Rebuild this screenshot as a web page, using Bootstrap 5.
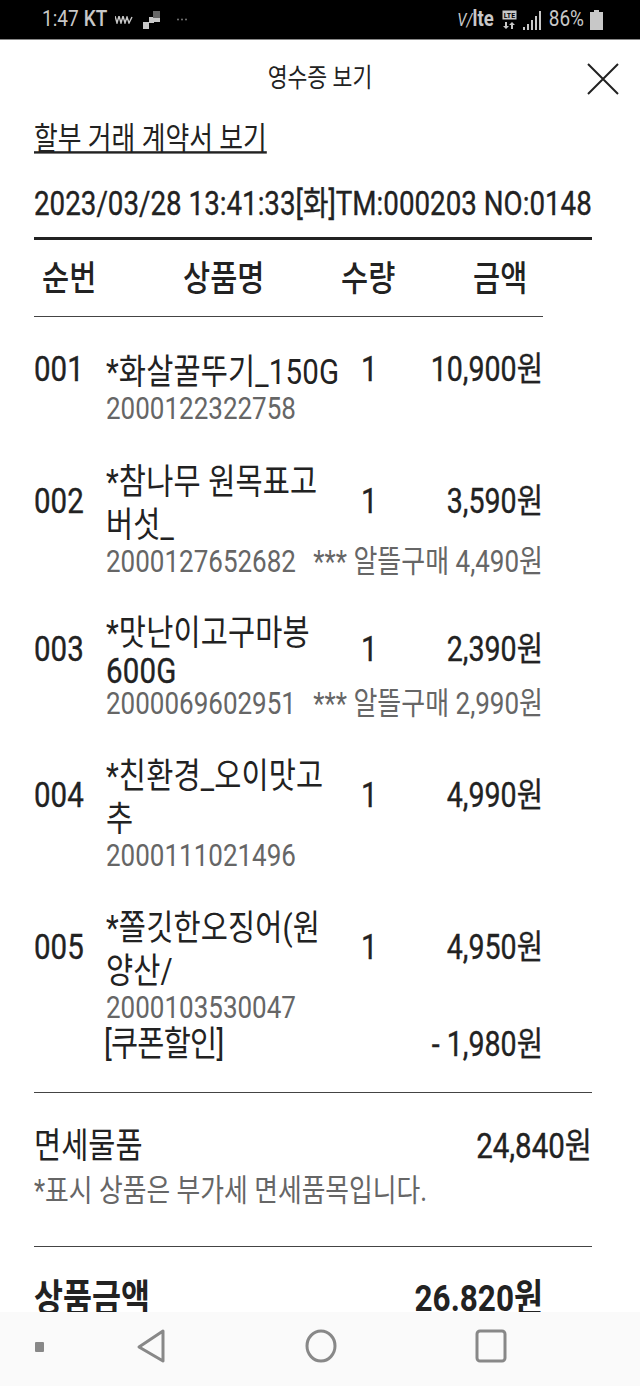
<!DOCTYPE html>
<html lang="ko">
<head>
    <meta charset="UTF-8">
    <meta name="viewport" content="width=device-width, initial-scale=1.0">
    <title>영수증 보기</title>
    <link href="https://cdn.jsdelivr.net/npm/bootstrap@5.3.0/dist/css/bootstrap.min.css" rel="stylesheet">
    <style>
        html, body { height: 1386px; overflow: hidden; }
        body { font-family: Roboto, "Noto Sans CJK KR", sans-serif; color: #222; background: #fff; }
        /* 스크린샷이 세로로 늘어나 있어서 글자를 세로로 키움 */
        .tx { display: block; white-space: nowrap; transform: scaleY(1.2); }
        .num-text { -webkit-text-stroke: .3px #222; }
        .status-bar { height: 40px; flex: none; background: #000; color: #c8c8c8; font-size: 19px; padding: 0 37px 0 42px; border-bottom: 1px solid #888; }
        .status-bar svg { display: block; flex: none; }
        .status-kt { font-weight: 500; margin-left: 5px; }
        .status-volte { font-weight: 700; font-size: 18.5px; }
        .status-volte i { font-weight: 400; font-size: 15px; }
        .title-bar { height: 76px; flex: none; font-size: 21.6px; padding-top: 2px; }
        .close-x { position: absolute; right: 21px; top: 23px; }
        .receipt { flex: 1 1 auto; min-height: 0; overflow: hidden; padding: 0 48px 0 34px; font-size: 29.5px; line-height: 43px; }
        .contract-link { display: inline-block; color: #222; font-size: 25.8px; line-height: 36px; margin-top: -2px; }
        .stamp { margin-top: 25px; font-size: 27.75px; line-height: 40px; }
        .rule-thick { height: 3px; background: #222; margin-top: 13px; }
        .rule-thin { height: 1px; background: #444; }
        .head-row { height: 76px; width: 509px; font-weight: 500; display: grid; grid-template-columns: 141px 158px 132px 1fr; align-items: center; padding-left: 8px; padding-top: 2px; }
        .items { width: 509px; padding-top: 32px; }
        .item-top { display: flex; align-items: center; }
        .item-no, .item-qty, .item-price { padding-bottom: 4px; }
        .item-no { width: 72px; flex: none; }
        .item-name { width: 255px; flex: none; letter-spacing: .15px; }
        .item-qty { flex: none; }
        .item-price { margin-left: auto; font-size: 28.6px; }
        .item-sub { color: #666; padding-left: 72px; display: flex; justify-content: space-between; font-size: 26px; line-height: 28px; }
        .item-first { line-height: 24px; margin-bottom: 41px; }
        .item-tight { margin-top: 39px; margin-bottom: 39px; }
        .item-tight .item-name { line-height: 38px; }
        .item-tight .item-sub { line-height: 26px; }
        .item-last-gap { margin-bottom: 38px; }
        .coupon-row { display: flex; justify-content: space-between; padding-left: 70px; line-height: 36px; margin-top: 5px; }
        .coupon-label { letter-spacing: -.8px; }
        .coupon-amount { font-size: 28.6px; }
        .total-amount { font-size: 29.5px; }
        .tax-note { color: #666; font-size: 25.8px; line-height: 38px; margin-top: 3px; }
        .sum-row { font-weight: 700; font-size: 31.5px; width: 509px; margin-top: 30px; }
        .nav-bar { height: 74px; flex: none; background: #fafafa; }
        .nav-bar svg { position: absolute; }
    </style>
</head>
<body class="d-flex flex-column">
    <!-- 상태바 -->
    <div class="status-bar d-flex align-items-center">
        <span class="tx">1:47</span><span class="tx status-kt">KT</span>
        <svg class="ms-2" width="18" height="8" viewBox="0 0 18 8" fill="none" stroke="#c8c8c8" stroke-width="1.4"><path d="M0 0l2 7 2-7 2 7 2-7 2 7 2-6 2 6 3-6"/></svg>
        <svg style="margin-left:10px" width="17" height="18" viewBox="0 0 17 18"><path fill="#c8c8c8" d="M0 11h6V6h5v6H6v6H0z"/><rect x="10" y="0" width="7" height="7" fill="#666"/><rect x="10" y="7" width="7" height="4" fill="#c8c8c8"/></svg>
        <svg style="margin-left:17px" width="10" height="3" viewBox="0 0 10 3" fill="#777"><circle cx="1" cy="1.5" r="1"/><circle cx="5" cy="1.5" r="1"/><circle cx="9" cy="1.5" r="1"/></svg>
        <span class="tx status-volte ms-auto"><i>V/</i>lte</span>
        <svg class="ms-2" width="15" height="20" viewBox="0 0 15 20"><rect x=".5" y=".5" width="14" height="9" fill="#c8c8c8"/><text x="7.5" y="7.5" font-size="7" font-weight="700" text-anchor="middle" fill="#000" font-family="Roboto, sans-serif">LTE</text><path fill="#c8c8c8" d="M3 12h2v4h2l-3 3-3-3h2zM11 19h-2v-4H7l3-3 3 3h-2z"/></svg>
        <svg style="margin-left:6px" width="20" height="20" viewBox="0 0 20 20" fill="#c8c8c8"><path d="M0 17h2v3H0zM4 14h2v6H4zM8 10h2v10H8zM12 6h2v14h-2zM16 1h2v19h-2z"/></svg>
        <span class="tx" style="margin-left:6px">86%</span>
        <svg style="margin-left:6px" width="13" height="20" viewBox="0 0 13 20" fill="#c8c8c8"><path d="M4 0h5v2h4v18H0V2h4z"/></svg>
    </div>

    <div class="position-relative title-bar d-flex align-items-center justify-content-center">
        <span class="tx">영수증 보기</span>
        <svg class="close-x" width="32" height="32" viewBox="0 0 32 32" stroke="#222" stroke-width="2" fill="none"><path d="M1 1l30 30M31 1L1 31"/></svg>
    </div>

    <div class="receipt">
        <a class="contract-link tx" href="#">할부 거래 계약서 보기</a>
        <div class="stamp tx num-text">2023/03/28 13:41:33[화]TM:000203 NO:0148</div>
        <div class="rule-thick"></div>
        <div class="head-row">
            <span class="tx">순번</span><span class="tx">상품명</span><span class="tx">수량</span><span class="tx">금액</span>
        </div>
        <div class="rule-thin" style="width:509px"></div>

        <div class="items">
            <div class="item-top"><span class="item-no tx num-text">001</span><div class="item-name"><span class="tx">*화살꿀뚜기_150G</span></div><span class="item-qty tx num-text">1</span><span class="item-price tx num-text">10,900원</span></div>
            <div class="item-sub item-first"><span class="tx">2000122322758</span></div>

            <div class="item-top"><span class="item-no tx num-text">002</span><div class="item-name"><span class="tx">*참나무 원목표고</span><span class="tx">버섯_</span></div><span class="item-qty tx num-text">1</span><span class="item-price tx num-text">3,590원</span></div>
            <div class="item-sub"><span class="tx">2000127652682</span><span class="tx">*** 알뜰구매 4,490원</span></div>

            <div class="item-tight">
                <div class="item-top"><span class="item-no tx num-text">003</span><div class="item-name"><span class="tx">*맛난이고구마봉</span><span class="tx num-text">600G</span></div><span class="item-qty tx num-text">1</span><span class="item-price tx num-text">2,390원</span></div>
                <div class="item-sub"><span class="tx">2000069602951</span><span class="tx">*** 알뜰구매 2,990원</span></div>
            </div>

            <div class="item-top"><span class="item-no tx num-text">004</span><div class="item-name"><span class="tx">*친환경_오이맛고</span><span class="tx">추</span></div><span class="item-qty tx num-text">1</span><span class="item-price tx num-text">4,990원</span></div>
            <div class="item-sub item-last-gap"><span class="tx">2000111021496</span></div>

            <div class="item-top"><span class="item-no tx num-text">005</span><div class="item-name"><span class="tx">*쫄깃한오징어(원</span><span class="tx">양산/</span></div><span class="item-qty tx num-text">1</span><span class="item-price tx num-text">4,950원</span></div>
            <div class="item-sub"><span class="tx">2000103530047</span></div>
            <div class="coupon-row"><span class="tx coupon-label">[쿠폰할인]</span><span class="tx coupon-amount num-text">- 1,980원</span></div>
        </div>

        <div class="rule-thin" style="margin-top:30px"></div>
        <div class="d-flex justify-content-between" style="margin-top:32px"><span class="tx">면세물품</span><span class="tx total-amount num-text">24,840원</span></div>
        <div class="tax-note"><span class="tx">*표시 상품은 부가세 면세품목입니다.</span></div>
        <div class="rule-thin" style="margin-top:37px"></div>
        <div class="sum-row d-flex justify-content-between"><span class="tx">상품금액</span><span class="tx">26.820원</span></div>
    </div>

    <!-- 내비게이션 바 -->
    <div class="nav-bar position-relative">
        <svg style="left:34px;top:24px" width="12" height="24" viewBox="0 0 12 24"><rect x="1" y="6" width="9" height="10" rx="1" fill="#888"/></svg>
        <svg style="left:134px;top:16px" width="34" height="36" viewBox="0 0 34 36" fill="none" stroke="#888" stroke-width="3" stroke-linejoin="round"><path d="M29 3L5 19l24 14z"/></svg>
        <svg style="left:304px;top:16px" width="34" height="36" viewBox="0 0 34 36" fill="none" stroke="#888" stroke-width="3"><ellipse cx="17" cy="18" rx="14" ry="15"/></svg>
        <svg style="left:474px;top:16px" width="34" height="36" viewBox="0 0 34 36" fill="none" stroke="#888" stroke-width="3"><rect x="3" y="3" width="28" height="30" rx="3"/></svg>
    </div>
</body>
</html>
